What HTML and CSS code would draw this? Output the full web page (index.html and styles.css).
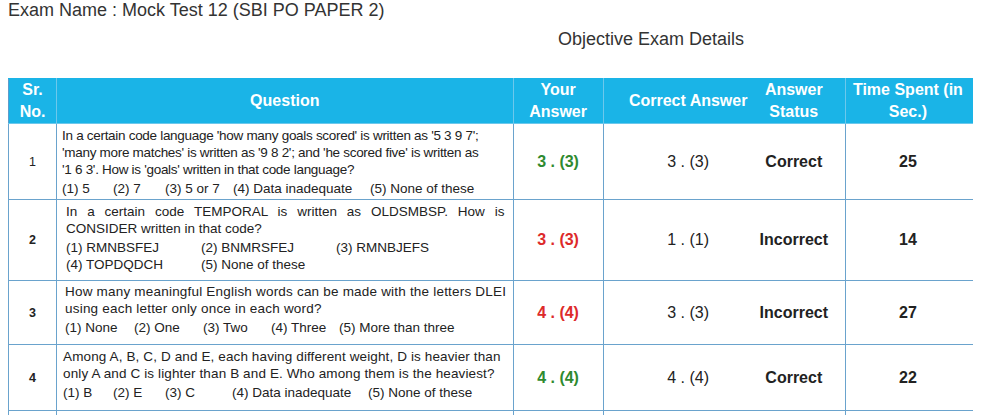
FILE: index.html
```html
<!DOCTYPE html>
<html>
<head>
<meta charset="utf-8">
<title>Objective Exam Details</title>
<link rel="stylesheet" href="styles.css">
</head>
<body>
<div class="exam-name">Exam Name : Mock Test 12 (SBI PO PAPER 2)</div>
<div class="section-title">Objective Exam Details</div>
<table class="results">
  <thead>
    <tr>
      <th class="c-sr">Sr.<br>No.</th>
      <th class="c-q">Question</th>
      <th class="c-your">Your<br>Answer</th>
      <th class="c-correct"><span class="shift">Correct Answer</span></th>
      <th class="c-status">Answer<br>Status</th>
      <th class="c-time">Time Spent (in<br>Sec.)</th>
    </tr>
  </thead>
  <tbody>
    <tr class="r1">
      <td class="sr">1</td>
      <td class="q q1">
        <div class="ln tight">In a certain code language 'how many goals scored' is written as '5 3 9 7';</div>
        <div class="ln tight">'many more matches' is written as '9 8 2'; and 'he scored five' is written as</div>
        <div class="ln tight">'1 6 3'. How is 'goals' written in that code language?</div>
        <div class="opts o-r1"><span>(1) 5</span><span>(2) 7</span><span>(3) 5 or 7</span><span>(4) Data inadequate</span><span>(5) None of these</span></div>
      </td>
      <td class="ans good">3 . (3)</td>
      <td class="correct"><span class="shift">3 . (3)</span></td>
      <td class="status">Correct</td>
      <td class="time">25</td>
    </tr>
    <tr class="r2">
      <td class="sr bold">2</td>
      <td class="q q2">
        <div class="ln just">In a certain code TEMPORAL is written as OLDSMBSP. How is</div>
        <div class="ln">CONSIDER written in that code?</div>
        <div class="opts o-r2"><span>(1) RMNBSFEJ</span><span>(2) BNMRSFEJ</span><span>(3) RMNBJEFS</span><span>(4) TOPDQDCH</span><span>(5) None of these</span></div>
      </td>
      <td class="ans bad">3 . (3)</td>
      <td class="correct"><span class="shift">1 . (1)</span></td>
      <td class="status">Incorrect</td>
      <td class="time">14</td>
    </tr>
    <tr class="r3">
      <td class="sr bold">3</td>
      <td class="q q3">
        <div class="ln wide">How many meaningful English words can be made with the letters DLEI</div>
        <div class="ln wide">using each letter only once in each word?</div>
        <div class="opts o-r3"><span>(1) None</span><span>(2) One</span><span>(3) Two</span><span>(4) Three</span><span>(5) More than three</span></div>
      </td>
      <td class="ans bad">4 . (4)</td>
      <td class="correct"><span class="shift">3 . (3)</span></td>
      <td class="status">Incorrect</td>
      <td class="time">27</td>
    </tr>
    <tr class="r4">
      <td class="sr bold">4</td>
      <td class="q q4">
        <div class="ln wider">Among A, B, C, D and E, each having different weight, D is heavier than</div>
        <div class="ln wider">only A and C is lighter than B and E. Who among them is the heaviest?</div>
        <div class="opts o-r4"><span>(1) B</span><span>(2) E</span><span>(3) C</span><span>(4) Data inadequate</span><span>(5) None of these</span></div>
      </td>
      <td class="ans good">4 . (4)</td>
      <td class="correct"><span class="shift">4 . (4)</span></td>
      <td class="status">Correct</td>
      <td class="time">22</td>
    </tr>
    <tr class="r5">
      <td class="sr"></td>
      <td class="q"></td>
      <td class="ans"></td>
      <td class="correct"></td>
      <td class="status"></td>
      <td class="time"></td>
    </tr>
  </tbody>
</table>
</body>
</html>
```

FILE: styles.css
```css
html, body {
  background: #ffffff;
}
body {
  margin: 0 8px;
  font-family: "Liberation Sans", Arial, sans-serif;
  color: #333333;
  overflow: hidden;
}
.exam-name {
  font-size: 18px;
  line-height: 20px;
  color: #333333;
}
.section-title {
  font-size: 18px;
  line-height: 20px;
  margin-top: 9px;
  padding-left: 550px;
  color: #333333;
}
.results {
  margin-top: 29px;
  width: 970px;
  table-layout: fixed;
  border-collapse: collapse;
  color: #222222;
}
.results th {
  background: #1ab4e7;
  color: #ffffff;
  font-weight: bold;
  font-size: 16px;
  line-height: 22px;
  padding: 0;
  height: 44px;
  text-align: center;
  vertical-align: middle;
  border: 1px solid #6cc8ec;
  border-top-color: #1ab4e7;
}
.results th:first-child { border-left-color: #5e9ccb; }
.results th:last-child { border-right-color: #5e9ccb; }
.c-sr { width: 47px; }
.c-q { width: 455px; }
.c-your { width: 89px; }
.c-correct { width: 149px; }
.c-status { width: 82px; }
.c-time { width: 124px; }
.results th.c-correct,
.results td.correct { border-right-style: hidden; }
.shift { display: inline-block; padding-left: 20px; }
.results td {
  border: 1px solid #6aa3cd;
  padding: 0;
  vertical-align: middle;
  text-align: center;
}
.results th.c-status,
.results td.status { padding-right: 10px; }
.results th.c-time,
.results td.time { padding-right: 7px; }
.sr { font-size: 12.5px; }
.bold { font-weight: bold; }
.results td.q {
  text-align: left;
  font-size: 13.5px;
  line-height: 17px;
  color: #222222;
  padding-left: 5px;
  padding-right: 4px;
}
.ln { white-space: nowrap; }
.tight { letter-spacing: -0.3px; }
.wide { letter-spacing: 0.2px; }
.wider { letter-spacing: 0.12px; }
.just {
  text-align: justify;
  text-align-last: justify;
  white-space: normal;
  margin-right: 4px;
}
.results td.q2 { padding-left: 9px; padding-bottom: 5px; }
.results td.q3 { padding-left: 8px; padding-bottom: 6px; }
.results td.q4 { padding-left: 6px; padding-bottom: 6px; }
.opts {
  display: grid;
  margin-top: 2px;
  white-space: nowrap;
}
.o-r1 { grid-template-columns: 51px 52px 68px 137px auto; }
.o-r2 { grid-template-columns: 135px 135px auto; }
.o-r3 { grid-template-columns: 69px 69px 68px 68px auto; }
.o-r4 { grid-template-columns: 50px 52px 67px 136px auto; }
.r1 { height: 76px; }
.r2 { height: 81px; }
.r3 { height: 64px; }
.r4 { height: 66px; }
.r5 { height: 60px; }
.ans {
  font-weight: bold;
  font-size: 16px;
}
.good { color: #2f8a2f; }
.bad { color: #dd2a2a; }
.correct {
  font-size: 16px;
  color: #222222;
}
.status {
  font-weight: bold;
  font-size: 16px;
  color: #222222;
}
.time {
  font-weight: bold;
  font-size: 16px;
  color: #222222;
}
```
